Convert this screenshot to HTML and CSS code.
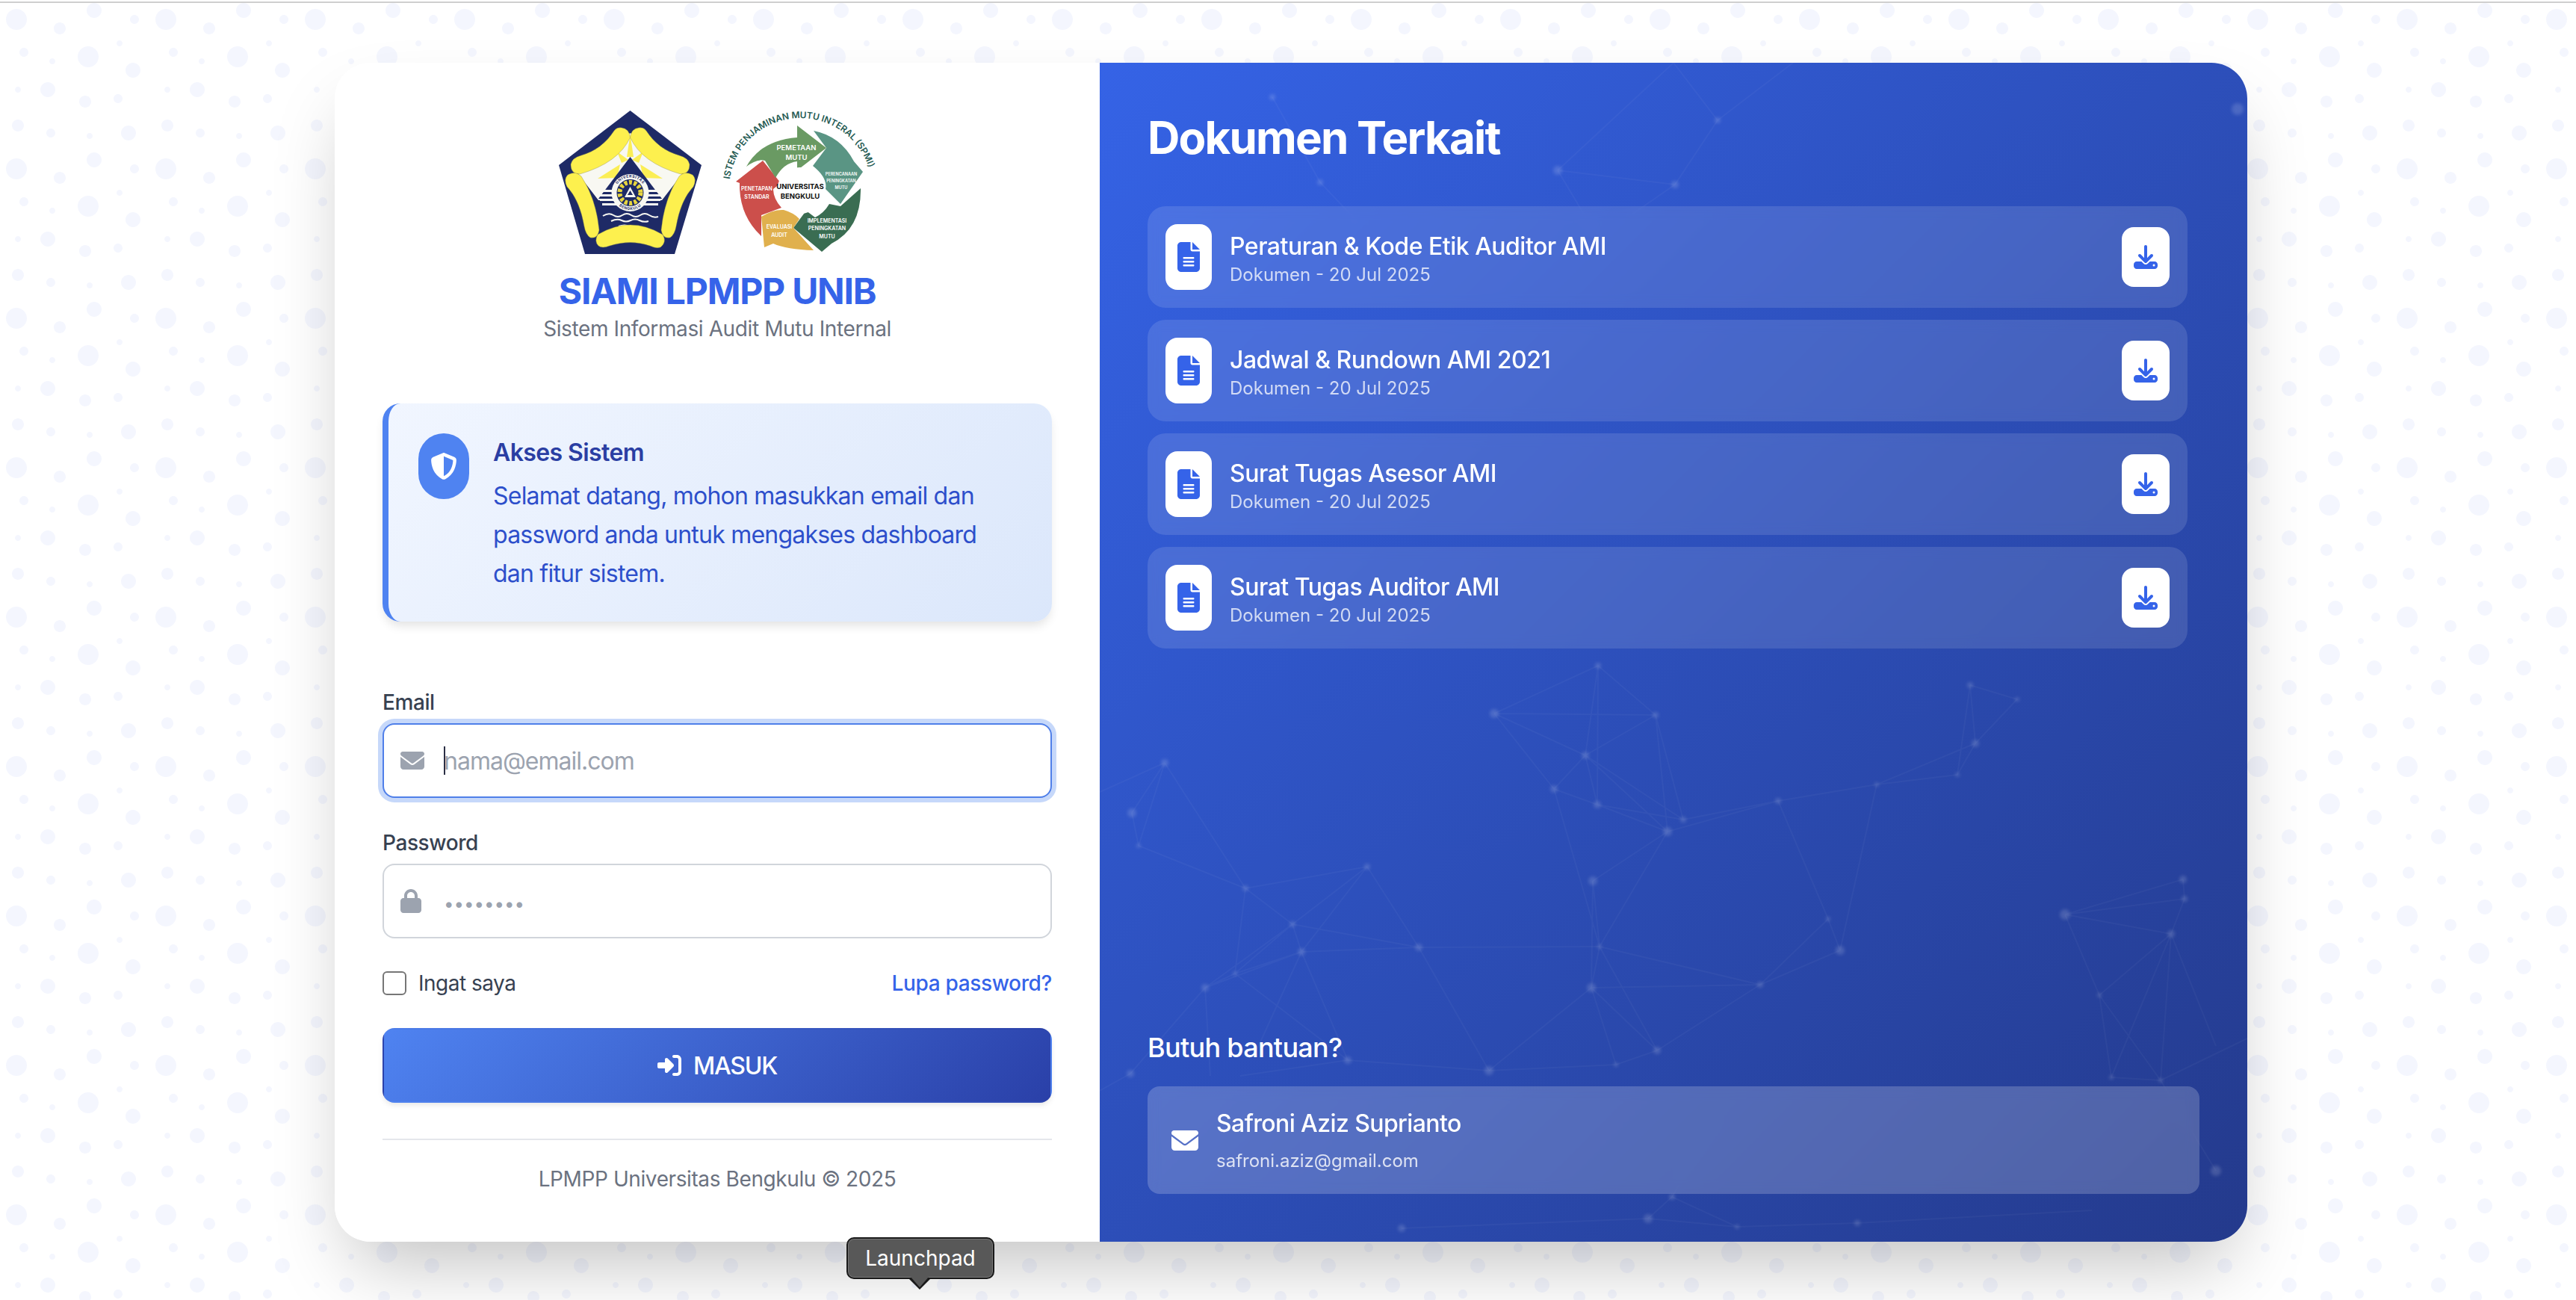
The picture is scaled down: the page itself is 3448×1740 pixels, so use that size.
FILE: index.html
```html
<!DOCTYPE html>
<html lang="id">
<head>
    <meta charset="UTF-8">
    <meta name="viewport" content="width=device-width, initial-scale=1.0">
    <title>SIAMI LPMPP UNIB</title>
    <link rel="stylesheet" href="styles.css">
</head>
<body>
    <!-- Icons -->
    <svg class="icon-defs" aria-hidden="true">
        <symbol id="i-file" viewBox="0 0 384 512"><path d="M64 0C28.7 0 0 28.7 0 64V448c0 35.3 28.7 64 64 64H320c35.3 0 64-28.7 64-64V160H256c-17.7 0-32-14.3-32-32V0H64zM256 0V128H384L256 0zM112 256H272c8.8 0 16 7.2 16 16s-7.2 16-16 16H112c-8.8 0-16-7.2-16-16s7.2-16 16-16zm0 64H272c8.8 0 16 7.2 16 16s-7.2 16-16 16H112c-8.8 0-16-7.2-16-16s7.2-16 16-16zm0 64H272c8.8 0 16 7.2 16 16s-7.2 16-16 16H112c-8.8 0-16-7.2-16-16s7.2-16 16-16z"/></symbol>
        <symbol id="i-download" viewBox="0 0 512 512"><path d="M288 32c0-17.7-14.3-32-32-32s-32 14.3-32 32V274.7l-73.4-73.4c-12.5-12.5-32.8-12.5-45.3 0s-12.5 32.8 0 45.3l128 128c12.5 12.5 32.8 12.5 45.3 0l128-128c12.5-12.5 12.5-32.8 0-45.3s-32.8-12.5-45.3 0L288 274.7V32zM64 352c-35.3 0-64 28.7-64 64v32c0 35.3 28.7 64 64 64H448c35.3 0 64-28.7 64-64V416c0-35.3-28.7-64-64-64H346.5l-45.3 45.3c-25 25-65.5 25-90.5 0L165.5 352H64zm368 56a24 24 0 1 1 0 48 24 24 0 1 1 0-48z"/></symbol>
        <symbol id="i-mail" viewBox="0 64 512 384"><path d="M48 64C21.5 64 0 85.5 0 112c0 15.1 7.1 29.3 19.2 38.4L236.8 313.6c11.4 8.5 27 8.5 38.4 0L492.8 150.4c12.1-9.1 19.2-23.3 19.2-38.4c0-26.5-21.5-48-48-48H48zM0 176V384c0 35.3 28.7 64 64 64H448c35.3 0 64-28.7 64-64V176L294.4 339.2c-22.8 17.1-54 17.1-76.8 0L0 176z"/></symbol>
    </svg>

    <div class="top-edge"></div>

    <main class="page">
        <div class="login-card">
            <!-- Left side: login form -->
            <section class="login-side">
                <div class="logos">
                    <svg class="logo-unib" viewBox="0 0 191 192" role="img" aria-label="Logo Universitas Bengkulu">
                        <polygon fill="#1e2a66" points="95.5,0 191,73 155,192 35,192 0,73"/>
                        <polygon fill="#f8f8f2" points="95.5,30 165,85 138,120 53,120 26,85"/>
                        <g fill="#fbee55">
                            <polygon points="95.5,32 100,62 91,62"/>
                            <polygon points="78,55 93,66 84,70"/>
                            <polygon points="113,55 98,66 107,70"/>
                            <polygon points="52,91 82,72 78,90"/>
                            <polygon points="139,91 109,72 113,90"/>
                        </g>
                        <polygon fill="#1e2a66" points="95.5,62 138,118 53,118"/>
                        <g fill="#f8f8f2">
                            <rect x="50" y="106" width="91" height="3"/>
                            <rect x="52" y="112" width="87" height="3"/>
                            <rect x="55" y="118" width="81" height="3"/>
                            <rect x="58" y="124" width="75" height="3"/>
                        </g>
                        <circle cx="95.5" cy="110" r="25" fill="#f8f8f2"/>
                        <circle cx="95.5" cy="110" r="18" fill="#1e2a66"/>
                        <circle cx="95.5" cy="110" r="14" fill="none" stroke="#e8d63f" stroke-width="6" stroke-dasharray="4 2.4"/>
                        <polygon fill="#f8f8f2" points="95.5,102 103,116 88,116"/>
                        <polygon fill="#1e2a66" points="95.5,107 99,113 92,113"/>
                        <path id="unib-top" fill="none" d="M75 110A20.500 20.500 0 0 1 116 110"/>
                        <path id="unib-bottom" fill="none" d="M72.500 110A23 23 0 0 0 118.500 110"/>
                        <text class="logo-seal"><textPath href="#unib-top" startOffset="50%" text-anchor="middle">UNIVERSITAS</textPath></text>
                        <text class="logo-seal"><textPath href="#unib-bottom" startOffset="50%" text-anchor="middle">BENGKULU</textPath></text>
                        <path fill="none" stroke="#f8f8f2" stroke-width="2" d="M59 141q8-5 14-1t12 0 12 0 12 0 12 0 12 2M70 148q8-4 14-1t12 0 12 0 12 1M80 155q8-3 15 0t15 1"/>
                        <g fill="#fdf04e" stroke="#8a8a50" stroke-width=".4">
                            <path id="lobe-top" d="M84 23Q94 24 95.500 36Q80 70 28 85Q16 85 16 72Q18 63 30 60Q58 52 74 27Q78 22 84 23Z"/>
                            <path id="lobe-side" d="M12 86Q22 80 30 88Q50 118 54 160Q52 172 42 170Q36 166 34 155Q28 120 11 102Q6 92 12 86Z"/>
                            <use href="#lobe-top" transform="matrix(-1 0 0 1 191 0)"/>
                            <use href="#lobe-side" transform="matrix(-1 0 0 1 191 0)"/>
                            <path d="M52 166Q96 140 139 166Q145 176 136 183Q130 185 122 181Q96 172 68 181Q58 185 53 181Q47 175 52 166Z"/>
                        </g>
                    </svg>
                    <svg class="logo-spm" viewBox="0 0 200 192" role="img" aria-label="Logo Sistem Penjaminan Mutu Internal">
                        <path id="spm-arc" fill="none" d="M3.700 92A95.800 95.800 0 0 1 194.100 99.600"/>
                        <text class="spm-arc-text"><textPath href="#spm-arc">ISTEM PENJAMINAN MUTU INTERAL (SPMI)</textPath></text>
                        <path fill="#5a9584" d="M116 27Q152 34 170 68L182 82L152 125L132 105Q135 90 115 74L133 50Z"/>
                        <path fill="#3a6d52" d="M179 104Q180 158 140 178L127 189L89 157L106 134L118 143Q130 137 137 125L152 128Z"/>
                        <path fill="#e0b04d" d="M46 142Q62 132 76 133Q90 137 97 145L89 157L116 187Q80 186 62 178L50 183Z"/>
                        <path fill="#cc4f4b" d="M46 168Q16 140 17 97L12 95L48 67L72 97L62 105Q62 118 73 130L46 140Z"/>
                        <path fill="#6a9a63" d="M26 75Q45 40 94 36L94 20L133 50L94 80L94 68Q76 70 65 90L51 67Q40 64 26 75Z"/>
                        <circle cx="98" cy="107" r="31" fill="#fff"/>
                        <g class="spm-label">
                            <text x="93" y="53" font-size="9.500">PEMETAAN</text>
                            <text x="93" y="66" font-size="9.500">MUTU</text>
                            <text x="40" y="107" font-size="7">PENETAPAN</text>
                            <text x="40" y="118" font-size="7">STANDAR</text>
                            <text x="153" y="87" font-size="5.500">PERENCANAAN</text>
                            <text x="153" y="96" font-size="5.500">PENINGKATAN</text>
                            <text x="153" y="105" font-size="5.500">MUTU</text>
                            <text x="134" y="150" font-size="7">IMPLEMENTASI</text>
                            <text x="134" y="160" font-size="7">PENINGKATAN</text>
                            <text x="134" y="171" font-size="7">MUTU</text>
                            <text x="70" y="158" font-size="7">EVALUASI</text>
                            <text x="70" y="169" font-size="7">AUDIT</text>
                            <text class="spm-center" x="98" y="105" font-size="9.500">UNIVERSITAS</text>
                            <text class="spm-center" x="98" y="118" font-size="9.500">BENGKULU</text>
                        </g>
                    </svg>
                </div>
                <h1 class="brand-title">SIAMI LPMPP UNIB</h1>
                <p class="brand-subtitle">Sistem Informasi Audit Mutu Internal</p>

                <div class="alert-box">
                    <div class="alert-icon">
                        <svg viewBox="0 0 512 512"><path d="M256 0c4.600 0 9.200 1 13.400 2.900L457.700 82.800c22 9.300 38.400 31 38.300 57.200c-.5 99.200-41.300 280.700-213.600 363.200c-16.700 8-36.100 8-52.800 0C57.300 420.700 16.500 239.200 16 140c-.1-26.200 16.300-47.900 38.300-57.200L242.700 2.900C246.800 1 251.400 0 256 0zm0 66.800V444.800C394 378 431.100 230.100 432 141.400L256 66.800l0 0z"/></svg>
                    </div>
                    <div class="alert-body">
                        <h3 class="alert-title">Akses Sistem</h3>
                        <p class="alert-text">Selamat datang, mohon masukkan email dan password anda untuk mengakses dashboard dan fitur sistem.</p>
                    </div>
                </div>

                <form class="login-form">
                    <label class="field-label" for="email">Email</label>
                    <div class="field">
                        <svg class="field-icon mail-icon"><use href="#i-mail"/></svg>
                        <input class="field-input focused" id="email" type="email" placeholder="nama@email.com">
                        <span class="caret"></span>
                    </div>

                    <label class="field-label second" for="password">Password</label>
                    <div class="field">
                        <svg class="field-icon lock-icon" viewBox="0 0 448 512"><path d="M144 144v48H304V144c0-44.200-35.800-80-80-80s-80 35.800-80 80zM80 192V144C80 64.500 144.500 0 224 0s144 64.500 144 144v48h16c35.300 0 64 28.700 64 64V448c0 35.300-28.700 64-64 64H64c-35.300 0-64-28.700-64-64V256c0-35.300 28.700-64 64-64H80z"/></svg>
                        <input class="field-input secret" id="password" type="password" placeholder="••••••••">
                    </div>

                    <div class="form-row">
                        <label class="remember"><span class="checkbox"></span>Ingat saya</label>
                        <a class="forgot" href="#">Lupa password?</a>
                    </div>

                    <button class="submit-button" type="button">
                        <svg viewBox="0 0 512 512"><path d="M217.900 105.900L340.700 228.700c7.200 7.200 11.300 17.100 11.300 27.300s-4.100 20.100-11.300 27.300L217.900 406.100c-6.400 6.400-15 9.900-24 9.900c-18.700 0-33.900-15.200-33.900-33.900l0-62.100L32 320c-17.700 0-32-14.300-32-32l0-64c0-17.700 14.300-32 32-32l128 0 0-62.100c0-18.700 15.200-33.900 33.900-33.900c9 0 17.600 3.600 24 9.900zM352 416l64 0c17.700 0 32-14.300 32-32l0-256c0-17.700-14.300-32-32-32l-64 0c-17.700 0-32-14.300-32-32s14.300-32 32-32l64 0c53 0 96 43 96 96l0 256c0 53-43 96-96 96l-64 0c-17.700 0-32-14.300-32-32s14.300-32 32-32z"/></svg>
                        MASUK
                    </button>
                </form>

                <footer class="login-footer">LPMPP Universitas Bengkulu © 2025</footer>
            </section>

            <!-- Right side: documents and help -->
            <section class="docs-side">
                <svg class="network" viewBox="1472 84 1536 1578" aria-hidden="true">
                    <path class="net-lines" d="M2139 891L2000 955M2139 891L2216 957M2139 891L2122 1011M2139 891L2138 1077M2000 955L2216 957M2000 955L2122 1011M2000 955L2080 1056M2216 957L2122 1011M2216 957L2232 1113M2216 957L2253 1097M2122 1011L2080 1056M2122 1011L2138 1077M2122 1011L2253 1097M2122 1011L2232 1113M2080 1056L2138 1077M2138 1077L2232 1113M2138 1077L2253 1097M2080 1056L2141 1267M2253 1097L2380 1072M2232 1113L2380 1072M2380 1072L2512 1050M2512 1050L2620 1037M2620 1037L2644 995M2644 995L2637 917M2637 917L2700 936M2700 936L2644 995M2637 917L2620 1037M2512 1050L2644 995M2380 1072L2447 1230M2447 1230L2463 1272M2512 1050L2463 1272M2232 1113L2132 1179M2132 1179L2141 1267M2232 1113L2141 1267M2141 1267L2130 1322M2132 1179L2130 1322M2463 1272L2356 1318M2447 1230L2356 1318M2356 1318L2141 1267M2356 1318L2130 1322M2130 1322L2218 1406M2141 1267L2218 1406M2130 1322L2163 1425M2356 1318L2218 1406M2218 1406L2163 1425M2163 1425L1993 1433"/>
                    <path class="net-lines" d="M1559 1021L1515 1088M1559 1021L1524 1132M1515 1088L1524 1132M1559 1021L1472 1060M1524 1132L1667 1189M1559 1021L1667 1189M1667 1189L1830 1160M1667 1189L1730 1237M1667 1189L1653 1303M1830 1160L1730 1237M1830 1160L1742 1274M1830 1160L1899 1268M1730 1237L1742 1274M1730 1237L1899 1268M1730 1237L1653 1303M1730 1237L1613 1322M1742 1274L1653 1303M1742 1274L1613 1322M1742 1274L1899 1268M1742 1274L1804 1419M1899 1268L1993 1433M1653 1303L1613 1322M1613 1322L1513 1437M1653 1303L1804 1419M1742 1274L1680 1410M1899 1268L2141 1267M1993 1433L1804 1419M2130 1322L1993 1433M1804 1419L1660 1440M1513 1437L1472 1460M1613 1322L1620 1440"/>
                    <path class="net-lines" d="M2764 1224L2922 1177M2764 1224L2924 1203M2764 1224L2906 1250M2922 1177L2924 1203M2924 1203L2906 1250M2764 1224L2810 1332M2906 1250L2810 1332M2906 1250L2826 1442M2906 1250L2892 1446M2810 1332L2826 1442M2810 1332L2892 1446M2826 1442L2892 1446M2892 1446L3008 1390M2906 1250L2966 1400M2892 1446L2966 1567M2238 1602L2206 1631M2206 1631L2325 1642M2238 1602L2325 1642M2325 1642L2486 1637M2486 1637L2800 1620M2238 1602L2300 1500M1876 1644L2206 1631M1703 130L1767 244M1767 244L1820 300M2085 228L2242 247M2299 161L2242 247M2299 161L2240 84M2299 161L2400 84M2085 228L2140 320M2242 247L2180 290M2085 228L2240 84"/>
                    <g class="net-nodes">
                        <circle cx="2139" cy="891" r="4"/><circle cx="2000" cy="955" r="6"/><circle cx="2216" cy="957" r="4"/><circle cx="2122" cy="1011" r="5"/><circle cx="2080" cy="1056" r="5"/><circle cx="2138" cy="1077" r="5"/><circle cx="2253" cy="1097" r="4"/><circle cx="2232" cy="1113" r="6"/><circle cx="2380" cy="1072" r="4"/><circle cx="2512" cy="1050" r="3"/><circle cx="2620" cy="1037" r="3"/><circle cx="2644" cy="995" r="5"/><circle cx="2637" cy="917" r="4"/><circle cx="2700" cy="936" r="3"/><circle cx="2132" cy="1179" r="6"/><circle cx="2141" cy="1267" r="3"/><circle cx="2130" cy="1322" r="6"/><circle cx="2447" cy="1230" r="3"/><circle cx="2463" cy="1272" r="6"/><circle cx="2356" cy="1318" r="4"/><circle cx="2218" cy="1406" r="5"/><circle cx="2163" cy="1425" r="3"/><circle cx="1993" cy="1433" r="6"/><circle cx="1804" cy="1419" r="5"/><circle cx="1513" cy="1437" r="5"/>
                        <circle cx="1559" cy="1021" r="5"/><circle cx="1515" cy="1088" r="6"/><circle cx="1524" cy="1132" r="3"/><circle cx="1667" cy="1189" r="4"/><circle cx="1830" cy="1160" r="4"/><circle cx="1730" cy="1237" r="4"/><circle cx="1742" cy="1274" r="5"/><circle cx="1899" cy="1268" r="5"/><circle cx="1653" cy="1303" r="3"/><circle cx="1613" cy="1322" r="5"/>
                        <circle cx="2764" cy="1224" r="7"/><circle cx="2922" cy="1177" r="5"/><circle cx="2924" cy="1203" r="4"/><circle cx="2906" cy="1250" r="5"/><circle cx="2810" cy="1332" r="3"/><circle cx="2826" cy="1442" r="3"/><circle cx="2892" cy="1446" r="3"/><circle cx="2966" cy="1567" r="7"/><circle cx="2238" cy="1602" r="4"/><circle cx="2206" cy="1631" r="6"/><circle cx="2325" cy="1642" r="3"/><circle cx="2486" cy="1637" r="4"/><circle cx="1876" cy="1644" r="5"/>
                        <circle cx="1703" cy="130" r="4"/><circle cx="2085" cy="228" r="6"/><circle cx="2299" cy="161" r="4"/><circle cx="2242" cy="247" r="5"/><circle cx="1767" cy="244" r="4"/><circle cx="2995" cy="146" r="8"/>
                    </g>
                </svg>

                <h2 class="docs-title">Dokumen Terkait</h2>
                <div class="doc-list">
                    <div class="doc-item">
                        <div class="doc-icon"><svg class="file-svg"><use href="#i-file"/></svg></div>
                        <div class="doc-text">
                            <div class="doc-name">Peraturan &amp; Kode Etik Auditor AMI</div>
                            <div class="doc-meta">Dokumen - 20 Jul 2025</div>
                        </div>
                        <a class="doc-download" href="#"><svg class="download-svg"><use href="#i-download"/></svg></a>
                    </div>
                    <div class="doc-item">
                        <div class="doc-icon"><svg class="file-svg"><use href="#i-file"/></svg></div>
                        <div class="doc-text">
                            <div class="doc-name">Jadwal &amp; Rundown AMI 2021</div>
                            <div class="doc-meta">Dokumen - 20 Jul 2025</div>
                        </div>
                        <a class="doc-download" href="#"><svg class="download-svg"><use href="#i-download"/></svg></a>
                    </div>
                    <div class="doc-item">
                        <div class="doc-icon"><svg class="file-svg"><use href="#i-file"/></svg></div>
                        <div class="doc-text">
                            <div class="doc-name">Surat Tugas Asesor AMI</div>
                            <div class="doc-meta">Dokumen - 20 Jul 2025</div>
                        </div>
                        <a class="doc-download" href="#"><svg class="download-svg"><use href="#i-download"/></svg></a>
                    </div>
                    <div class="doc-item">
                        <div class="doc-icon"><svg class="file-svg"><use href="#i-file"/></svg></div>
                        <div class="doc-text">
                            <div class="doc-name">Surat Tugas Auditor AMI</div>
                            <div class="doc-meta">Dokumen - 20 Jul 2025</div>
                        </div>
                        <a class="doc-download" href="#"><svg class="download-svg"><use href="#i-download"/></svg></a>
                    </div>
                </div>

                <div class="help-block">
                    <h3 class="help-title">Butuh bantuan?</h3>
                    <div class="contact-box">
                        <svg class="contact-icon"><use href="#i-mail"/></svg>
                        <div>
                            <div class="contact-name">Safroni Aziz Suprianto</div>
                            <div class="contact-email">safroni.aziz@gmail.com</div>
                        </div>
                    </div>
                </div>
            </section>
        </div>
    </main>

    <!-- Dock tooltip lying over the page -->
    <div class="dock-tooltip">Launchpad</div>
</body>
</html>
```

FILE: styles.css
```css
* {
    box-sizing: border-box;
}
html, body {
    height: 100%;
}
body {
    margin: 0;
    position: relative;
    overflow: hidden;
    font-family: 'Inter', 'Liberation Sans', sans-serif;
    color: #374151;
    background-color: #fff;
    background-image: url("data:image/svg+xml,%3Csvg xmlns='http://www.w3.org/2000/svg' width='200' height='200' viewBox='0 0 100 100'%3E%3Cpath fill='%233563e9' fill-opacity='.055' d='M11 18c3.866 0 7-3.134 7-7s-3.134-7-7-7-7 3.134-7 7 3.134 7 7 7zm48 25c3.866 0 7-3.134 7-7s-3.134-7-7-7-7 3.134-7 7 3.134 7 7 7zm-43-7c1.657 0 3-1.343 3-3s-1.343-3-3-3-3 1.343-3 3 1.343 3 3 3zm63 31c1.657 0 3-1.343 3-3s-1.343-3-3-3-3 1.343-3 3 1.343 3 3 3zM34 90c1.657 0 3-1.343 3-3s-1.343-3-3-3-3 1.343-3 3 1.343 3 3 3zm56-76c1.657 0 3-1.343 3-3s-1.343-3-3-3-3 1.343-3 3 1.343 3 3 3zM12 86c2.21 0 4-1.79 4-4s-1.79-4-4-4-4 1.79-4 4 1.79 4 4 4zm28-65c2.21 0 4-1.79 4-4s-1.79-4-4-4-4 1.79-4 4 1.79 4 4 4zm23-11c2.76 0 5-2.24 5-5s-2.24-5-5-5-5 2.24-5 5 2.24 5 5 5zm-6 60c2.21 0 4-1.79 4-4s-1.79-4-4-4-4 1.79-4 4 1.79 4 4 4zm29 22c2.76 0 5-2.24 5-5s-2.24-5-5-5-5 2.24-5 5 2.24 5 5 5zM32 63c2.76 0 5-2.24 5-5s-2.24-5-5-5-5 2.24-5 5 2.24 5 5 5zm57-13c2.76 0 5-2.24 5-5s-2.24-5-5-5-5 2.24-5 5 2.24 5 5 5zm-9-21c1.105 0 2-.895 2-2s-.895-2-2-2-2 .895-2 2 .895 2 2 2zM60 91c1.105 0 2-.895 2-2s-.895-2-2-2-2 .895-2 2 .895 2 2 2zM35 41c1.105 0 2-.895 2-2s-.895-2-2-2-2 .895-2 2 .895 2 2 2zM12 60c1.105 0 2-.895 2-2s-.895-2-2-2-2 .895-2 2 .895 2 2 2z'/%3E%3C/svg%3E");
    background-position: 0 4px;
}
.icon-defs {
    display: none;
}
.top-edge {
    height: 2px;
    margin-top: 2px;
    background-color: #cfcfcf;
}
.page {
    display: flex;
    justify-content: center;
    padding: 80px 0 0 8px;
}
.login-card {
    display: flex;
    width: 2560px;
    height: 1578px;
    border-radius: 48px;
    overflow: hidden;
    box-shadow: 0 50px 100px -24px rgba(0, 0, 0, 0.25);
}

/* Left side */
.login-side {
    width: 1024px;
    padding: 64px;
    background-color: #fff;
}
.logos {
    display: flex;
    justify-content: center;
    gap: 34px;
    height: 192px;
}
.logo-unib {
    width: 191px;
    height: 192px;
}
.logo-spm {
    width: 200px;
    height: 192px;
    overflow: visible;
}
.logo-seal {
    font-size: 5px;
    font-weight: 700;
    fill: #1e2a66;
    letter-spacing: 0.6px;
}
.spm-arc-text {
    font-size: 12px;
    font-weight: 600;
    fill: #1f5a52;
}
.spm-label text {
    fill: #fff;
    font-weight: 600;
    text-anchor: middle;
}
.spm-label .spm-center {
    fill: #111;
    font-weight: 700;
}
.brand-title {
    margin: 22px 0 0;
    font-size: 48px;
    line-height: 56px;
    font-weight: 700;
    letter-spacing: -1.2px;
    text-align: center;
    color: #3563e9;
}
.brand-subtitle {
    margin: 2px 0 0;
    font-size: 28px;
    line-height: 40px;
    letter-spacing: -0.39px;
    text-align: center;
    color: #6b7280;
}
.alert-box {
    display: flex;
    gap: 32px;
    height: 292px;
    margin-top: 80px;
    padding: 40px;
    border-left: 8px solid #4f83f1;
    border-radius: 24px;
    background-image: linear-gradient(135deg, #f1f6ff, #dbe7fb);
    box-shadow: 0 8px 14px -3px rgba(0, 0, 0, 0.12);
}
.alert-icon {
    flex: none;
    display: flex;
    align-items: center;
    justify-content: center;
    width: 68px;
    height: 88px;
    border-radius: 34px;
    background-color: #4f83f1;
}
.alert-icon svg {
    width: 36px;
    height: 36px;
    fill: #fff;
}
.alert-body {
    padding-top: 2px;
}
.alert-title {
    margin: 0;
    font-size: 32px;
    line-height: 48px;
    font-weight: 600;
    letter-spacing: -0.6px;
    color: #2a3ea3;
}
.alert-text {
    margin: 8px 0 0;
    font-size: 32px;
    line-height: 52px;
    letter-spacing: -0.78px;
    color: #2d4fcb;
}

/* Form */
.login-form {
    margin-top: 88px;
}
.field-label {
    display: block;
    font-size: 28px;
    line-height: 40px;
    font-weight: 500;
    letter-spacing: -0.4px;
    color: #374151;
}
.field-label.second {
    margin-top: 40px;
}
.field {
    position: relative;
    margin-top: 8px;
}
.field-input {
    display: block;
    width: 100%;
    height: 100px;
    padding: 0 24px 0 80px;
    border: 2px solid #d1d5db;
    border-radius: 16px;
    outline: none;
    background-color: #fff;
    font-family: inherit;
    font-size: 32px;
    letter-spacing: -1px;
    color: #374151;
}
.field-input::placeholder {
    color: #9ca3af;
    opacity: 1;
}
.field-input.secret::placeholder {
    font-size: 24px;
    letter-spacing: 0;
}
.field-input.focused {
    border-color: #4f7fe9;
    box-shadow: 0 0 0 6px #c6d8fa;
}
.field-icon {
    position: absolute;
    left: 24px;
    fill: #9ca3af;
}
.mail-icon {
    top: 38px;
    width: 32px;
    height: 24px;
}
.lock-icon {
    top: 34px;
    width: 28px;
    height: 32px;
}
.caret {
    position: absolute;
    left: 82px;
    top: 31px;
    width: 2px;
    height: 38px;
    background-color: #2b2f45;
}
.form-row {
    display: flex;
    align-items: center;
    justify-content: space-between;
    height: 32px;
    margin-top: 44px;
}
.remember {
    display: flex;
    align-items: center;
    gap: 16px;
    font-size: 28px;
    letter-spacing: -0.5px;
    color: #374151;
}
.checkbox {
    width: 32px;
    height: 32px;
    border: 2px solid #767676;
    border-radius: 6px;
    background-color: #fff;
}
.forgot {
    font-size: 28px;
    font-weight: 500;
    letter-spacing: -0.35px;
    color: #3563e9;
    text-decoration: none;
}
.submit-button {
    display: flex;
    align-items: center;
    justify-content: center;
    gap: 16px;
    width: 100%;
    height: 100px;
    margin-top: 44px;
    border: 2px solid transparent;
    border-radius: 16px;
    background-image: linear-gradient(135deg, #4f83f1, #2a40a8);
    box-shadow: 0 4px 8px -2px rgba(0, 0, 0, 0.12);
    font-family: inherit;
    font-size: 32px;
    font-weight: 500;
    letter-spacing: -1.2px;
    color: #fff;
}
.submit-button svg {
    width: 32px;
    height: 32px;
    fill: #fff;
}
.login-footer {
    margin-top: 48px;
    padding-top: 32px;
    border-top: 2px solid #e5e7eb;
    font-size: 28px;
    line-height: 40px;
    letter-spacing: -0.4px;
    text-align: center;
    color: #6b7280;
}

/* Right side */
.docs-side {
    position: relative;
    display: flex;
    flex-direction: column;
    width: 1536px;
    padding: 64px;
    color: #fff;
    background-image: linear-gradient(135deg, #3563e6, #243a8c);
}
.network {
    position: absolute;
    inset: 0;
    width: 100%;
    height: 100%;
}
.net-lines {
    fill: none;
    stroke: #fff;
    stroke-opacity: 0.035;
    stroke-width: 2;
}
.net-nodes circle {
    fill: #fff;
    fill-opacity: 0.15;
    filter: blur(2px);
}
.docs-title {
    position: relative;
    margin: 0 0 56px;
    font-size: 60px;
    line-height: 72px;
    font-weight: 700;
    letter-spacing: -1.8px;
}
.doc-list {
    position: relative;
    display: flex;
    flex-direction: column;
    gap: 16px;
    padding-right: 16px;
}
.doc-item {
    display: flex;
    align-items: center;
    padding: 24px;
    border-radius: 24px;
    background-color: rgba(255, 255, 255, 0.12);
    backdrop-filter: blur(8px);
}
.doc-icon {
    flex: none;
    display: flex;
    padding: 24px 16px;
    border-radius: 16px;
    background-color: #fff;
}
.file-svg {
    width: 30px;
    height: 40px;
    fill: #3563e9;
}
.doc-text {
    flex: 1;
    margin-left: 24px;
}
.doc-name {
    margin-bottom: -4px;
    font-size: 32px;
    line-height: 52px;
    font-weight: 500;
    letter-spacing: -0.5px;
}
.doc-meta {
    font-size: 24px;
    line-height: 32px;
    color: rgba(255, 255, 255, 0.75);
}
.doc-download {
    flex: none;
    display: flex;
    padding: 24px 16px;
    border-radius: 16px;
    background-color: #fff;
}
.download-svg {
    width: 32px;
    height: 32px;
    fill: #3563e9;
}
.help-block {
    position: relative;
    margin-top: auto;
}
.help-title {
    margin: 0 0 28px;
    font-size: 36px;
    line-height: 48px;
    font-weight: 500;
    letter-spacing: -0.7px;
}
.contact-box {
    display: flex;
    align-items: center;
    gap: 24px;
    height: 144px;
    padding: 0 32px;
    border-radius: 16px;
    background-color: rgba(255, 255, 255, 0.2);
    backdrop-filter: blur(8px);
}
.contact-icon {
    flex: none;
    width: 36px;
    height: 27px;
    fill: #fff;
}
.contact-name {
    margin-bottom: -4px;
    font-size: 32px;
    line-height: 52px;
    font-weight: 500;
    letter-spacing: -0.6px;
}
.contact-email {
    margin-top: 8px;
    font-size: 24px;
    line-height: 40px;
    color: rgba(255, 255, 255, 0.8);
}

/* Tooltip */
.dock-tooltip {
    position: absolute;
    left: 1133px;
    top: 1656px;
    width: 198px;
    height: 56px;
    border: 2px solid #1a1a1a;
    border-radius: 10px;
    background-color: #585858;
    box-shadow: inset 0 0 0 1px #787878;
    font-size: 28px;
    line-height: 52px;
    text-align: center;
    color: #fff;
}
.dock-tooltip::before,
.dock-tooltip::after {
    content: "";
    position: absolute;
    left: 50%;
    border-style: solid;
    border-color: transparent;
}
.dock-tooltip::before {
    top: 100%;
    margin-left: -17px;
    border-width: 16px 16px 0;
    border-top-color: #1a1a1a;
}
.dock-tooltip::after {
    top: 100%;
    margin-left: -14px;
    margin-top: -2px;
    border-width: 15px 13px 0;
    border-top-color: #585858;
}
```
